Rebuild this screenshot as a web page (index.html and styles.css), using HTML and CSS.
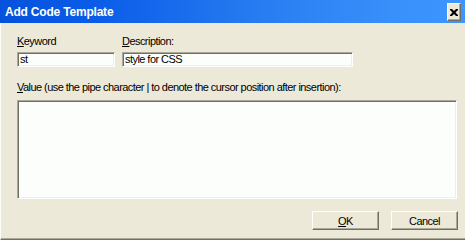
FILE: index.html
```html
<!DOCTYPE html>
<html>
<head>
<meta charset="utf-8">
<link rel="stylesheet" href="styles.css">
</head>
<body>
<div class="window">
  <div class="titlebar">
    <span class="title">Add Code Template</span>
    <span class="close" aria-label="Close">
      <svg width="8" height="7" viewBox="0 0 8 7"><path d="M0 0h2l2 2 2-2h2v1L5.5 3.5 8 6v1H6L4 5 2 7H0V6l2.5-2.5L0 1z" fill="#000"/></svg>
    </span>
  </div>
  <div class="body">
    <div class="row">
      <div class="field keyword">
        <label class="lbl"><u>K</u>eyword</label>
        <div class="input">st</div>
      </div>
      <div class="field desc">
        <label class="lbl"><u>D</u>escription:</label>
        <div class="input">style for CSS</div>
      </div>
    </div>
    <label class="lbl value-lbl"><u>V</u>alue (use the pipe character | to denote the cursor position after insertion):</label>
    <div class="textarea"></div>
    <div class="buttons">
      <span class="btn"><u>O</u>K</span>
      <span class="btn">Cancel</span>
    </div>
  </div>
</div>
</body>
</html>
```
FILE: styles.css
```css
html, body {
  margin: 0;
  padding: 0;
}
body {
  width: 465px;
  height: 240px;
  overflow: hidden;
  background: #ece9d8;
  font-family: "Liberation Sans", Arial, sans-serif;
  font-size: 11px;
  letter-spacing: -0.55px;
  color: #000;
}
.window {
  width: 465px;
  height: 240px;
  display: flex;
  flex-direction: column;
  background: #ece9d8;
}
.titlebar {
  height: 23px;
  flex: none;
  display: flex;
  align-items: center;
  justify-content: space-between;
  padding: 0 4px 0 5px;
  background: linear-gradient(to right, #0552dc 0%, #0a5ce8 20%, #2a80f2 60%, #3890fb 85%, #3d95ff 100%);
}
.title {
  color: #fff;
  font-weight: bold;
  font-size: 12px;
  letter-spacing: -0.2px;
  line-height: 16px;
  margin-top: 1px;
}
.close {
  width: 12px;
  height: 16px;
  display: flex;
  align-items: center;
  justify-content: center;
  background: #ece9d8;
  border-top: 1px solid #fff;
  border-left: 1px solid #fff;
  border-right: 1px solid #716f64;
  border-bottom: 1px solid #716f64;
  box-shadow: inset -1px -1px 0 #aca899;
  margin-top: 1px;
}
.body {
  flex: 1;
  display: flex;
  flex-direction: column;
  padding: 12px 0 0 16px;
  border-left: 1px solid #fcfcf9;
  border-bottom: 1px solid #716f64;
  box-shadow: inset 0 -1px 0 #aca899;
}
.row {
  display: flex;
  gap: 7px;
}
.field {
  display: flex;
  flex-direction: column;
  gap: 4px;
}
.keyword { width: 98px; }
.desc { width: 231px; }
.lbl {
  display: block;
  line-height: 13px;
  height: 13px;
  white-space: nowrap;
}
.input, .textarea {
  box-sizing: border-box;
  background: #fbfefb;
  border-top: 1px solid #aca899;
  border-left: 1px solid #aca899;
  border-right: 1px solid #fff;
  border-bottom: 1px solid #fff;
  box-shadow: inset 1px 1px 0 #716f64, inset -1px -1px 0 #f1efe2;
}
.input {
  height: 15px;
  line-height: 13px;
  padding: 0 2px;
  white-space: nowrap;
}
.value-lbl {
  margin-top: 14px;
}
.textarea {
  margin-top: 6px;
  width: 440px;
  height: 99px;
}
.buttons {
  display: flex;
  justify-content: flex-end;
  gap: 12px;
  margin-top: 12px;
  padding-right: 7px;
}
.btn {
  box-sizing: border-box;
  width: 67px;
  height: 19px;
  display: flex;
  align-items: center;
  justify-content: center;
  background: #ece9d8;
  border-top: 1px solid #fff;
  border-left: 1px solid #fff;
  border-right: 1px solid #716f64;
  border-bottom: 1px solid #716f64;
  box-shadow: inset -1px -1px 0 #aca899;
}
```
